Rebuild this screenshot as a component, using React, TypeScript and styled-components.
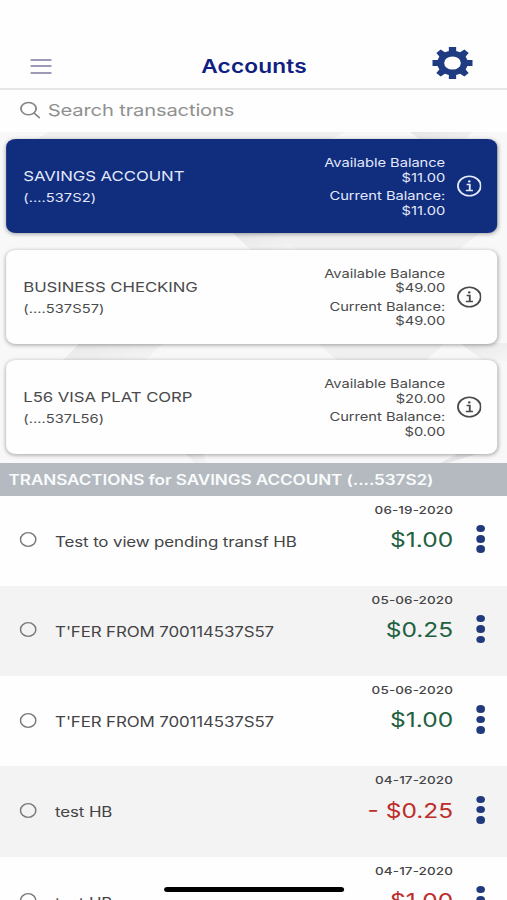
import React from 'react';
import styled, { createGlobalStyle } from 'styled-components';

const GlobalStyle = createGlobalStyle`
  * { box-sizing: border-box; }
  html, body { margin: 0; padding: 0; overflow: hidden; background: #fefefe; }
  body { width: 507px; height: 900px; }
`;

/* The 414pt wide layout is stretched to fill the 507px viewport. */
const Screen = styled.div`
  width: 414px;
  height: 900px;
  overflow: hidden;
  display: grid;
  grid-template-rows: 90px 42px 331px 32.5px 1fr;
  transform: scaleX(1.22464);
  transform-origin: 0 0;
  background: #fefefe;
  color: #444446;
  font-family: Inter, 'Liberation Sans', sans-serif;
  white-space: nowrap;
`;

const Header = styled.header`
  display: grid;
  grid-template-columns: 1fr auto 1fr;
  align-items: center;
  padding: 42px 28px 0 25px;
  border-bottom: 2px solid #e6e6e6;
`;

const MenuButton = styled.div`
  height: 15px;
  width: 17px;
  margin-top: 2px;
  display: flex;
  flex-direction: column;
  justify-content: space-between;
`;

const MenuLine = styled.span`
  height: 2px;
  background: #9c9ab6;
`;

const Title = styled.h1`
  margin: 2px -2px 0 2px;
  font-size: 18.5px;
  font-weight: 600;
  line-height: 24px;
  letter-spacing: 0.15px;
  color: #0e2080;
`;

const GearIcon = styled.svg`
  justify-self: end;
  width: 33px;
  height: 32px;
  margin-top: -4px;
  fill: #1f3c82;
`;

const SearchBar = styled.div`
  display: flex;
  align-items: center;
  padding: 0 0 2px 16px;
  gap: 6px;
  font-size: 16.5px;
  letter-spacing: -0.15px;
  color: #909090;
  svg { width: 17px; height: 18px; }
`;

const Accounts = styled.section`
  display: grid;
  min-height: 0;
  > * { grid-area: 1 / 1; }
`;

const Backdrop = styled.svg`
  width: 414px;
  height: 331px;
`;

const CardList = styled.div`
  display: flex;
  flex-direction: column;
  gap: 16.4px;
  padding: 7.4px 8px 0 5px;
  z-index: 1;
`;

const Card = styled.article<{ $active?: boolean }>`
  height: 94px;
  display: flex;
  align-items: center;
  padding: 0 13px 0 14px;
  border-radius: 8px;
  background: ${p => (p.$active ? '#102d7e' : '#fefefe')};
  color: ${p => (p.$active ? '#e3e8fb' : '#4a4a4c')};
  box-shadow: 0 1px 4px rgba(0, 0, 0, 0.36);
`;

const CardInfo = styled.div`
  flex: 1;
`;

const CardName = styled.div`
  font-size: 13.7px;
  line-height: 20px;
  letter-spacing: -0.05px;
`;

const CardNumber = styled.div`
  font-size: 12px;
  line-height: 16px;
  margin-top: 4px;
  letter-spacing: 0.05px;
`;

const Balances = styled.div`
  text-align: right;
  font-size: 12px;
  line-height: 14.6px;
  letter-spacing: -0.03px;
  margin-right: 9px;
  padding-top: 2px;
`;

const Balance = styled.div`
  & + & { margin-top: 4px; }
`;

const InfoIcon = styled.svg`
  width: 20.5px;
  height: 22px;
  fill: none;
  stroke: currentColor;
  stroke-width: 1.5;
`;

const SectionHeader = styled.h2`
  margin: 0;
  padding: 0 7px;
  line-height: 33px;
  background: #b4babf;
  color: #f9fbfc;
  font-size: 14px;
  font-weight: 600;
  letter-spacing: -0.08px;
`;

const Row = styled.div<{ $shaded: boolean }>`
  height: 90.3px;
  display: grid;
  grid-template-columns: 14px 1fr auto 8px;
  padding: 0 17px 0 16px;
  background: ${p => (p.$shaded ? '#f3f3f3' : '#fefefe')};
`;

const Radio = styled.svg`
  width: 14px;
  height: 15px;
  margin-top: 36.5px;
  fill: none;
  stroke: #7a7a7d;
  stroke-width: 1.3;
`;

const Description = styled.div`
  margin: 36px 0 0 15px;
  font-size: 13.8px;
  line-height: 20px;
  letter-spacing: -0.1px;
`;

const Figures = styled.div`
  text-align: right;
  margin-right: 19px;
`;

const DateText = styled.div`
  margin-top: 6px;
  font-size: 11px;
  font-weight: 500;
  line-height: 16px;
  letter-spacing: 0.1px;
`;

const Amount = styled.div<{ $debit: boolean }>`
  margin-top: 10.2px;
  font-size: 20px;
  line-height: 24px;
  color: ${p => (p.$debit ? '#bd2d29' : '#22603f')};
`;

const More = styled.div`
  display: flex;
  flex-direction: column;
  gap: 2.9px;
  margin-top: 29.2px;
`;

const Dot = styled.span`
  width: 7.4px;
  height: 7.5px;
  border-radius: 50%;
  background: #213a7e;
`;

const HomeIndicator = styled.div`
  position: absolute;
  left: 133.5px;
  top: 887px;
  width: 147.5px;
  height: 5px;
  border-radius: 3px;
  background: #000;
`;

const accounts = [
  { name: 'SAVINGS ACCOUNT', number: '(....537S2)', available: '$11.00', current: '$11.00' },
  { name: 'BUSINESS CHECKING', number: '(....537S57)', available: '$49.00', current: '$49.00' },
  { name: 'L56 VISA PLAT CORP', number: '(....537L56)', available: '$20.00', current: '$0.00' },
];

const transactions = [
  { text: 'Test to view pending transf HB', date: '06-19-2020', amount: '$1.00', debit: false },
  { text: "T'FER FROM 700114537S57", date: '05-06-2020', amount: '$0.25', debit: false },
  { text: "T'FER FROM 700114537S57", date: '05-06-2020', amount: '$1.00', debit: false },
  { text: 'test HB', date: '04-17-2020', amount: '- $0.25', debit: true },
  { text: 'test HB', date: '04-17-2020', amount: '$1.00', debit: true },
];

export default function App() {
  return (
    <>
      <GlobalStyle />
      <Screen>
        <Header>
          <MenuButton>
            <MenuLine />
            <MenuLine />
            <MenuLine />
          </MenuButton>
          <Title>Accounts</Title>
          <GearIcon viewBox="-16 -16 32 32" preserveAspectRatio="none">
            <path
              fillRule="evenodd"
              d="M-2.9-16H2.9V-12L6-10.8L9.4-13.4L12.8-10.1L10.4-6.6L11.8-2.9H16V2.9H11.8L10.4 6.6L12.8 10.1L9.4 13.4L6 10.8L2.9 12V16H-2.9V12L-6 10.8L-9.4 13.4L-12.8 10.1L-10.4 6.6L-11.8 2.9H-16V-2.9H-11.8L-10.4-6.6L-12.8-10.1L-9.4-13.4L-6-10.8L-2.9-12ZM0-6.6A6.6 6.6 0 1 0 0 6.6A6.6 6.6 0 1 0 0-6.6Z"
            />
          </GearIcon>
        </Header>
        <SearchBar>
          <svg viewBox="0 0 17 18" fill="none" stroke="#858585" strokeWidth="1.5" strokeLinecap="round">
            <circle cx="7.3" cy="7.6" r="6.2" />
            <path d="M11.8 12.1L16 16.6" />
          </svg>
          <span>Search transactions</span>
        </SearchBar>
        <Accounts>
          <Backdrop viewBox="0 0 507 331" preserveAspectRatio="none">
            <defs>
              <linearGradient id="band" x1="0" y1="0" x2="1" y2="1">
                <stop offset="0" stopColor="#e6e6e7" />
                <stop offset="1" stopColor="#f6f6f7" />
              </linearGradient>
            </defs>
            <rect width="507" height="331" fill="#f8f8f9" />
            <path d="M36 8L48 0H150L345 0L330 8Z" fill="#f0f0f1" />
            <path d="M410 0H472L462 12H425Z" fill="url(#band)" />
            <path d="M232 100L254 121H300L275 100Z" fill="url(#band)" />
            <path d="M275 100L300 121H455L480 100Z" fill="#f0f0f1" />
            <path d="M80 211L62 229H145L163 211Z" fill="url(#band)" />
            <path d="M318 211L338 229H425L445 211Z" fill="#f0f0f1" />
            <path d="M460 211L484 229H507V211Z" fill="url(#band)" />
            <path d="M185 321L195 331H207L203 321Z" fill="url(#band)" />
            <path d="M460 321L440 331H448L480 321Z" fill="#e6e6e8" />
          </Backdrop>
          <CardList>
            {accounts.map((a, i) => (
              <Card key={a.name} $active={i === 0}>
                <CardInfo>
                  <CardName>{a.name}</CardName>
                  <CardNumber>{a.number}</CardNumber>
                </CardInfo>
                <Balances>
                  <Balance>Available Balance<br />{a.available}</Balance>
                  <Balance>Current Balance:<br />{a.current}</Balance>
                </Balances>
                <InfoIcon viewBox="0 0 20.5 22" preserveAspectRatio="none">
                  <ellipse cx="10.25" cy="11" rx="9.3" ry="9.7" />
                  <path d="M8 9.4H10.6V15.3M7.4 15.4H13.2" />
                  <circle cx="10.2" cy="6.4" r="1.1" fill="currentColor" stroke="none" />
                </InfoIcon>
              </Card>
            ))}
          </CardList>
        </Accounts>
        <SectionHeader>TRANSACTIONS for SAVINGS ACCOUNT (....537S2)</SectionHeader>
        <div>
          {transactions.map((t, i) => (
            <Row key={i} $shaded={i % 2 === 1}>
              <Radio viewBox="0 0 14 15">
                <ellipse cx="7" cy="7.5" rx="6.3" ry="6.8" />
              </Radio>
              <Description>{t.text}</Description>
              <Figures>
                <DateText>{t.date}</DateText>
                <Amount $debit={t.debit}>{t.amount}</Amount>
              </Figures>
              <More>
                <Dot />
                <Dot />
                <Dot />
              </More>
            </Row>
          ))}
        </div>
        <HomeIndicator />
      </Screen>
    </>
  );
}
